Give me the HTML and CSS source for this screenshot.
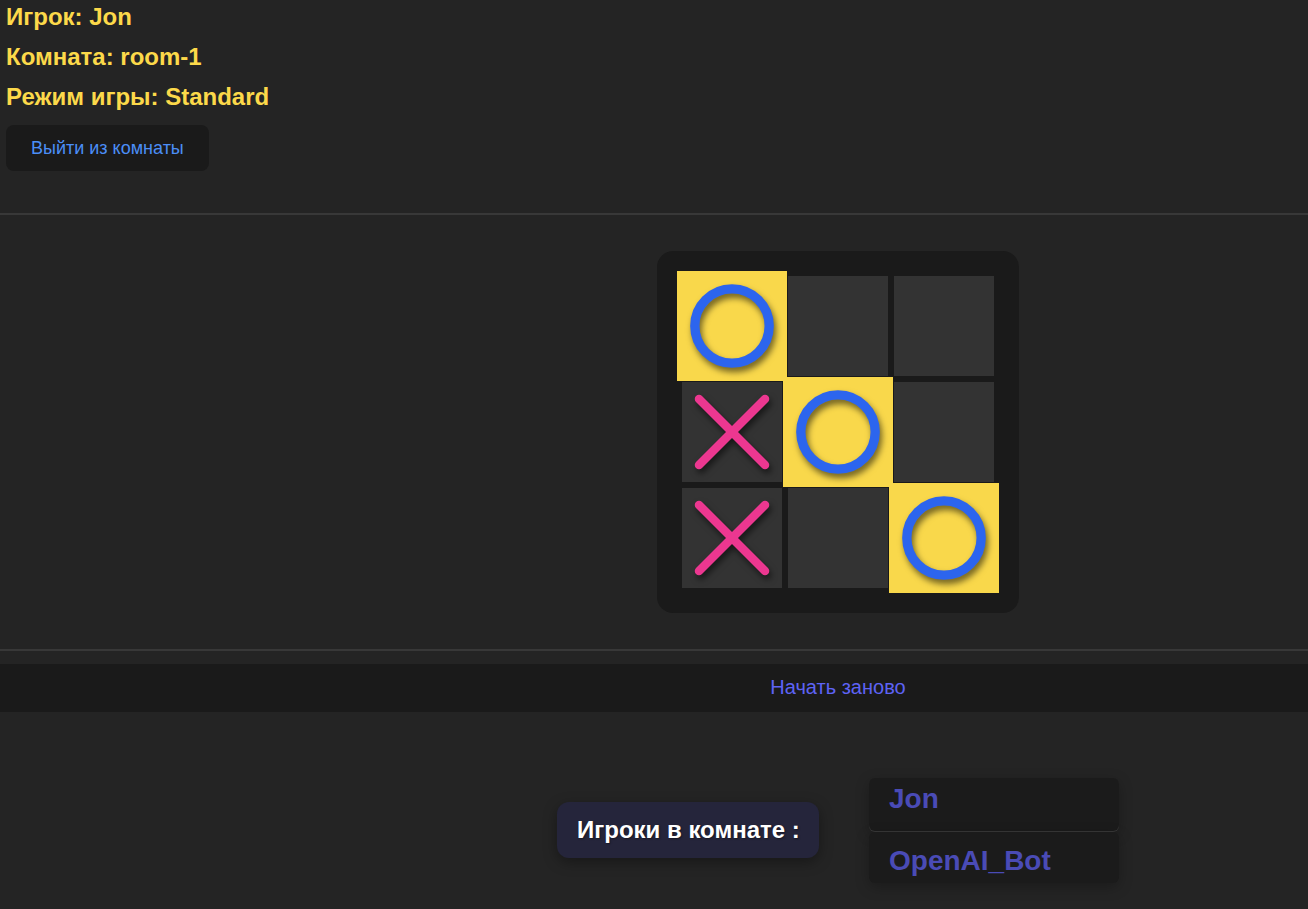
FILE: index.html
```html
<!DOCTYPE html>
<html lang="ru">
<head>
<meta charset="utf-8">
<title>Крестики-нолики</title>
<link rel="stylesheet" href="styles.css">
</head>
<body>
<div class="page">
  <header class="info">
    <div class="info-lines">
      <div class="info-line">Игрок: Jon</div>
      <div class="info-line">Комната: room-1</div>
      <div class="info-line">Режим игры: Standard</div>
    </div>
    <button class="leave">Выйти из комнаты</button>
  </header>
  <div class="divider"></div>
  <section class="game">
    <div class="board">
      <div class="cell win"><svg viewBox="0 0 100 100" class="mark"><circle cx="50" cy="50" r="33.8" class="o"/></svg></div>
      <div class="cell"></div>
      <div class="cell"></div>
      <div class="cell"><svg viewBox="0 0 100 100" class="mark"><line x1="17" y1="17" x2="83" y2="83" class="x"/><line x1="83" y1="17" x2="17" y2="83" class="x"/></svg></div>
      <div class="cell win"><svg viewBox="0 0 100 100" class="mark"><circle cx="50" cy="50" r="33.8" class="o"/></svg></div>
      <div class="cell"></div>
      <div class="cell"><svg viewBox="0 0 100 100" class="mark"><line x1="17" y1="17" x2="83" y2="83" class="x"/><line x1="83" y1="17" x2="17" y2="83" class="x"/></svg></div>
      <div class="cell"></div>
      <div class="cell win"><svg viewBox="0 0 100 100" class="mark"><circle cx="50" cy="50" r="33.8" class="o"/></svg></div>
    </div>
  </section>
  <div class="divider"></div>
  <button class="restart"><span>Начать заново</span></button>
  <section class="players-row">
    <div class="players-label">Игроки в комнате :</div>
    <ul class="players-list">
      <li class="player player-first">Jon</li>
      <li class="player player-second">OpenAI_Bot</li>
    </ul>
  </section>
</div>
</body>
</html>
```
FILE: styles.css
```css
* { box-sizing: border-box; }
html, body {
  margin: 0;
  padding: 0;
  background: #242424;
  font-family: "Liberation Sans", Arial, sans-serif;
}
.page {
  width: 1308px;
  min-height: 909px;
}
.info {
  padding: 0 6px 41.5px;
}
.info-lines {
  display: flex;
  flex-direction: column;
  gap: 5px;
}
.info-line {
  color: #fcd94a;
  font-weight: bold;
  font-size: 24px;
  line-height: 34.8px;
}
.leave {
  margin-top: 10.5px;
  height: 46.5px;
  padding: 0 25px;
  border: none;
  border-radius: 8px;
  background: #1a1a1a;
  color: #4b8ef7;
  font-family: inherit;
  font-size: 18px;
  cursor: pointer;
}
.divider {
  height: 2px;
  background: #383838;
}
.game {
  padding: 36px 0 36px 368px;
  display: flex;
  justify-content: center;
}
.board {
  width: 362px;
  height: 362px;
  padding: 25px;
  background: #1a1a1a;
  border-radius: 16px;
  display: grid;
  grid-template-columns: repeat(3, 100px);
  grid-template-rows: repeat(3, 100px);
  gap: 6px;
}
.cell {
  background: #333333;
  display: flex;
  align-items: center;
  justify-content: center;
}
.cell.win {
  background: #f9d84b;
  transform: scale(1.1);
}
.mark {
  width: 100px;
  height: 100px;
  filter: drop-shadow(2px 4px 3px rgba(0, 0, 0, 0.55));
}
.o {
  fill: none;
  stroke: #2c65ee;
  stroke-width: 8.5;
}
.x {
  stroke: #ec3790;
  stroke-width: 8.5;
  stroke-linecap: round;
}
.restart {
  display: flex;
  width: 100%;
  height: 48px;
  margin-top: 13px;
  padding: 0 0 0 368px;
  border: none;
  background: #1a1a1a;
  align-items: center;
  justify-content: center;
  color: #5e63f5;
  font-family: inherit;
  font-size: 20px;
  cursor: pointer;
}
.players-row {
  margin-top: 66px;
  padding-left: 368px;
  display: flex;
  justify-content: center;
  align-items: center;
  gap: 50px;
}
.players-label {
  width: 262px;
  height: 56px;
  padding: 0 20px;
  display: flex;
  align-items: center;
  background: #25253b;
  border-radius: 12px;
  color: #ffffff;
  font-weight: bold;
  font-size: 24px;
  white-space: nowrap;
  box-shadow: 0 4px 14px rgba(0, 0, 0, 0.35);
  text-shadow: 1px 1px 2px rgba(0, 0, 0, 0.4);
}
.players-list {
  list-style: none;
  margin: 0;
  padding: 0;
  width: 250px;
  display: flex;
  flex-direction: column;
  gap: 1px;
}
.player {
  background: #1b1b1b;
  border-radius: 6px;
  padding-left: 20px;
  color: #4a4bb6;
  font-weight: bold;
  font-size: 28px;
  line-height: 31px;
  box-shadow: 0 4px 14px rgba(0, 0, 0, 0.25);
}
.player-first {
  height: 53px;
  padding-top: 5px;
  box-shadow: 0 1px 0 #383838, 0 4px 14px rgba(0, 0, 0, 0.25);
}
.player-second {
  height: 51px;
  padding-top: 13.5px;
}
```
